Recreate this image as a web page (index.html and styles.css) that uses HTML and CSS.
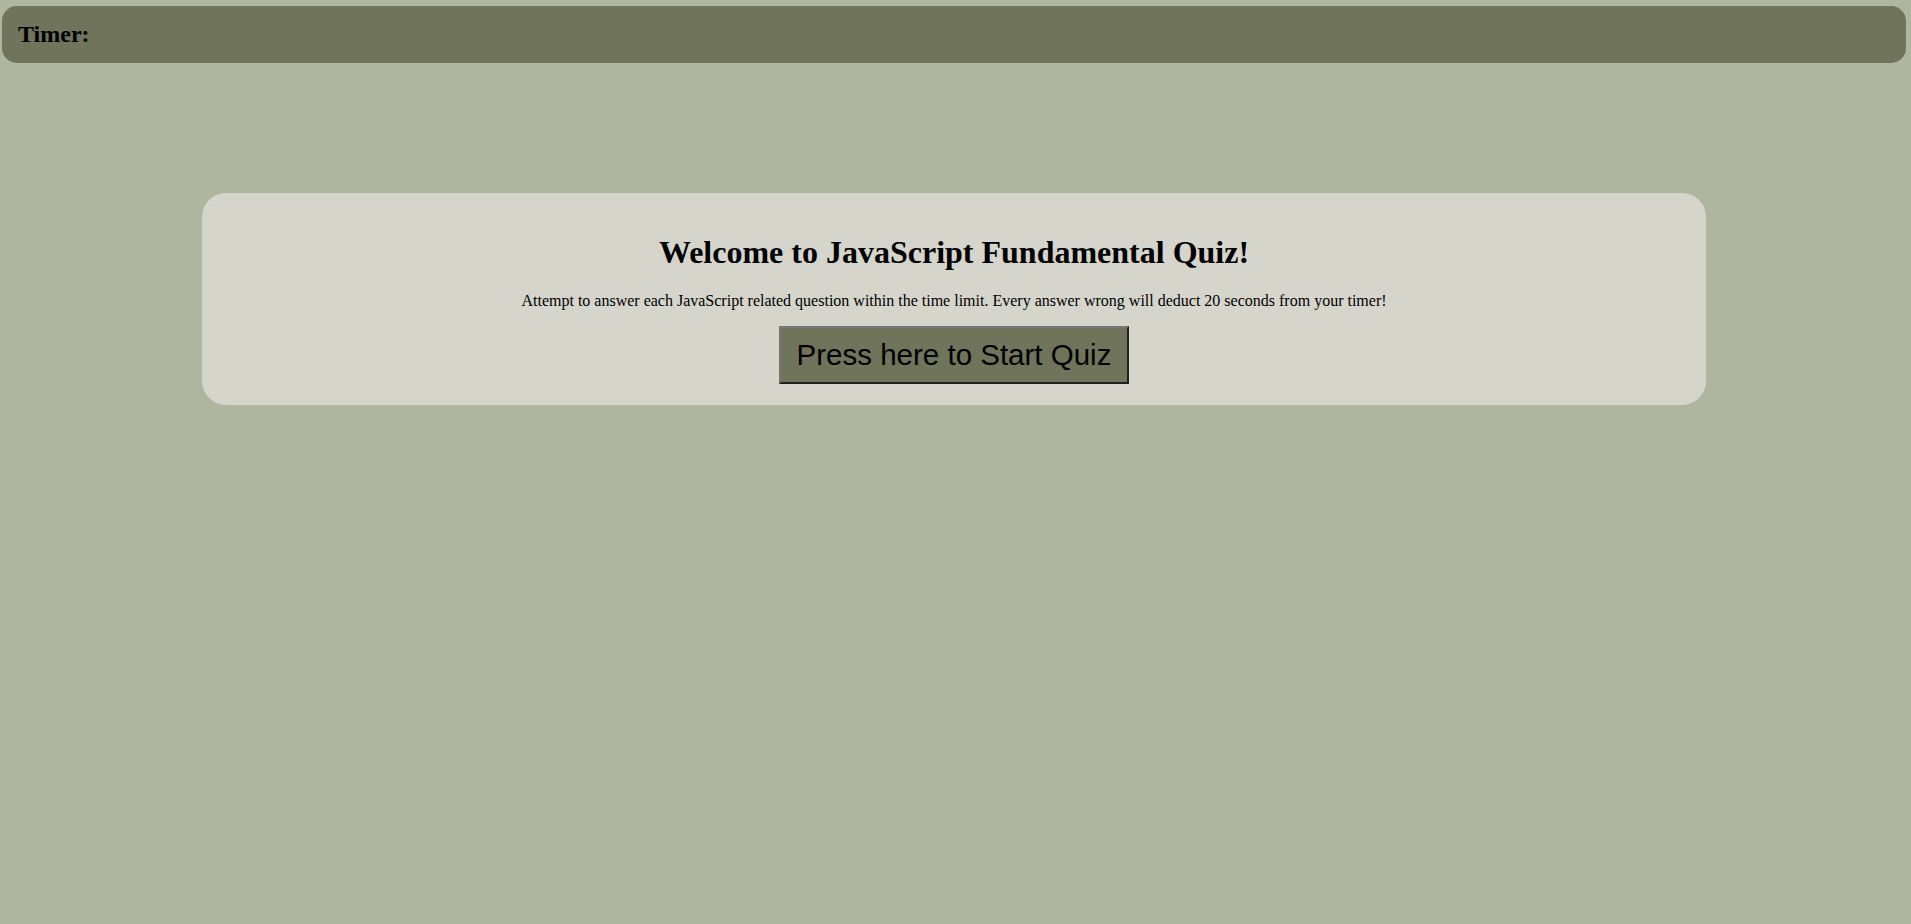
FILE: index.html
```html
<!DOCTYPE html>
<html>
<head>
    <title>JavaScript Fundamental Quiz</title>
    <link rel="stylesheet" href="styles.css">
</head>
<body>
    <header class="timer-bar">
        <h2 class="timer">Timer: <span id="timeLeft"></span></h2>
    </header>

    <main class="quiz-card" id="startScreen">
        <h1 class="quiz-title">Welcome to JavaScript Fundamental Quiz!</h1>
        <p class="quiz-intro">Attempt to answer each JavaScript related question within the time limit. Every answer wrong will deduct 20 seconds from your timer!</p>
        <button class="start-btn" id="startBtn">Press here to Start Quiz</button>
    </main>
</body>
</html>
```

FILE: styles.css
```css
body {
    font-family: "Liberation Serif", "Times New Roman", serif;
    background-color: #afb69f;
    margin: 0;
    padding: 0;
}

.timer-bar {
    margin: 6px 5px 0 2px;
    padding: 15px 16px;
    background-color: #6f745b;
    border-radius: 15px;
}

.timer {
    margin: 0;
    font-size: 24px;
}

.quiz-card {
    width: 1504px;
    margin: 130px 0 0 202px;
    padding: 20px 20px 21px;
    box-sizing: border-box;
    background-color: #d5d5cc;
    border-radius: 24px;
    text-align: center;
}

.quiz-title {
    font-size: 32px;
    margin: 21px 0;
}

.quiz-intro {
    font-size: 16px;
    margin: 16px 0;
}

.start-btn {
    display: block;
    margin: 0 auto;
    padding: 10px 16px;
    font-family: "Liberation Sans", Arial, sans-serif;
    font-size: 29.5px;
    color: #000;
    background-color: #6f745b;
    border: 2px outset #767676;
    cursor: pointer;
}
```
